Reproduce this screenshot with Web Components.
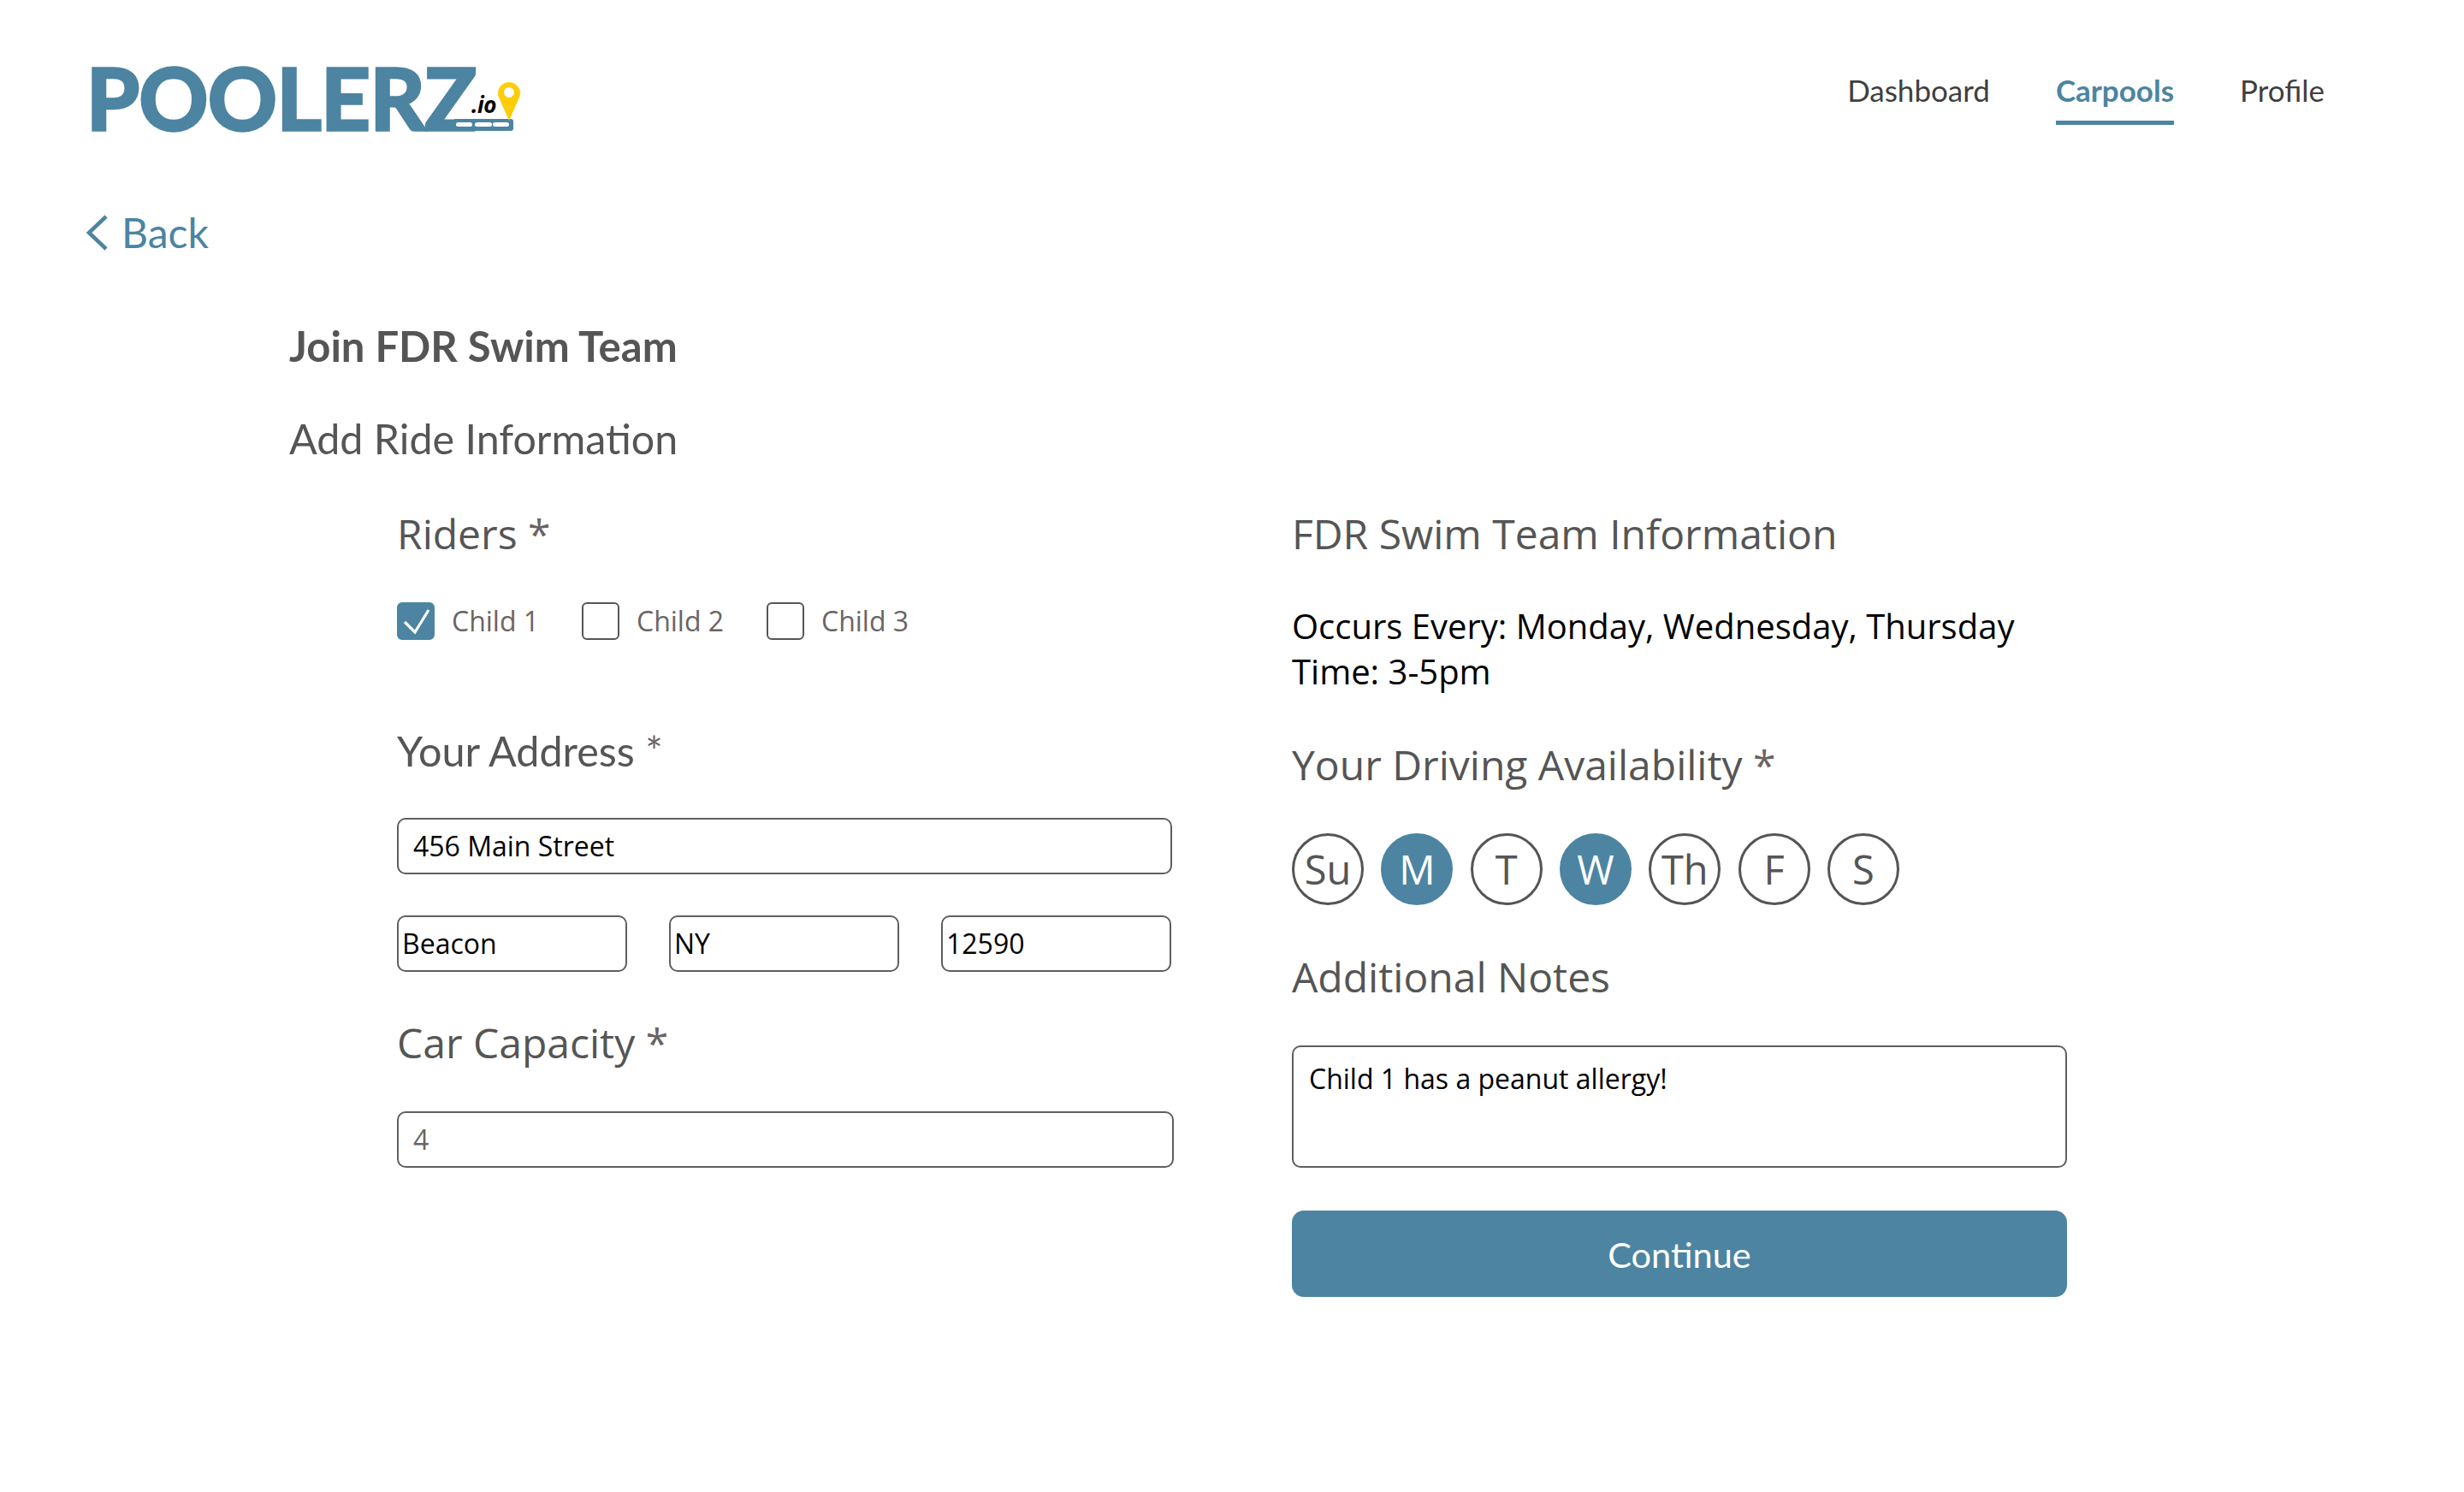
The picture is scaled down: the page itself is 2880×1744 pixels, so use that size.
<!DOCTYPE html>
<html lang="en">
<head>
<meta charset="utf-8">
<title>Poolerz</title>
<style>
html,body{margin:0;padding:0;background:#fff}
body{width:2880px;height:1744px;overflow:hidden;font-family:"Open Sans",sans-serif;color:#555}
</style>
</head>
<body>
<ride-page></ride-page>
<script>
const def=(name,css,html)=>{
  customElements.define(name,class extends HTMLElement{
    constructor(){super();const r=this.attachShadow({mode:'open'});r.innerHTML=`<style>${css}</style>${html}`;}
  });
};
def('poolerz-logo',`:host{display:block;position:relative;width:520px;height:100px}
.word{display:block;padding:0 0 0 1px;font:700 100px/86px Lato,sans-serif;letter-spacing:-.3px;color:#4C84A2;-webkit-text-stroke:3.5px #4C84A2;white-space:nowrap;height:100px}
.io{position:absolute;left:451px;top:32px;font:italic 700 26px/40px "Open Sans",sans-serif;color:#000;letter-spacing:-.5px}
svg{display:block;position:absolute;left:0;top:0}`,`
<span class="word">POOLERZ</span>
<svg width="520" height="100" viewBox="0 0 520 100" aria-hidden="true">
  <rect x="430" y="69" width="70" height="14" rx="3" fill="#4C84A2"/>
  <rect x="433" y="73" width="19" height="5" rx="2.5" fill="#fff"/>
  <rect x="455" y="73" width="20" height="5" rx="2.5" fill="#fff"/>
  <rect x="476" y="73" width="19" height="5" rx="2.5" fill="#fff"/>
  <path fill-rule="evenodd" fill="#FFCC0A" d="M495 71 L484 46 A13 13 0 1 1 506 46 Z M495 32 A6 6 0 1 0 495 44 A6 6 0 1 0 495 32 Z"/>
</svg>
<span class="io">.io</span>`);
def('nav-link',`:host{display:block;font:400 35px/40px Lato,sans-serif;color:#3f3f3f;padding-bottom:16px;border-bottom:5px solid transparent}
:host([active]){font-weight:700;color:#4C84A2;border-bottom-color:#4C84A2}`,`<slot></slot>`);
def('site-header',`:host{display:flex;justify-content:space-between;align-items:flex-start;height:240px;padding:70px 163px 0 100px;box-sizing:border-box}
nav{display:flex;gap:77px;margin-top:15px}`,`<poolerz-logo></poolerz-logo><nav><nav-link>Dashboard</nav-link><nav-link active>Carpools</nav-link><nav-link>Profile</nav-link></nav>`);
def('back-link',`:host{display:flex;align-items:center;gap:15px;height:60px;margin-left:100px;padding-top:2px;font:400 48px/60px Lato,sans-serif;color:#4C84A2}
svg{display:block}`,`<svg width="27" height="44" viewBox="0 0 27 44"><path d="M24 3 L4 22 L24 41" fill="none" stroke="#4C84A2" stroke-width="4.5" stroke-linejoin="miter"/></svg><slot></slot>`);
def('page-title',`:host{display:block;height:60px;font:400 48.4px/60px Lato,sans-serif;color:#555}
:host([strong]){font-weight:700;font-size:49px}`,`<slot></slot>`);
def('field-label',`:host{display:block;height:60px;font:400 48px/60px "Open Sans",sans-serif;color:#555;white-space:nowrap}
:host([soft]){font-family:Lato,sans-serif;font-size:48.5px}
::slotted(span){color:#6b6363}`,`<slot></slot>`);
def('check-item',`:host{display:flex;align-items:center;gap:20px;height:44px;font:400 32px/44px "Open Sans",sans-serif;color:#6b6565}
.box{width:44px;height:44px;box-sizing:border-box;border:2.5px solid #5a5555;border-radius:6px;flex:none}
:host([checked]) .box{background:#4C84A2;border-color:#4C84A2}
svg{display:none;margin:-2.5px}
:host([checked]) svg{display:block}`,`<div class="box"><svg width="44" height="44" viewBox="0 0 44 44"><path d="M9 23 L21 35 L37 9" fill="none" stroke="#fff" stroke-width="3.2" stroke-linejoin="miter"/></svg></div><slot></slot>`);
def('text-box',`:host{display:flex;align-items:center;box-sizing:border-box;height:66px;padding:0 17px;border:2.5px solid #5f5f5f;border-radius:10px;font:400 32px/44px "Open Sans",sans-serif;color:#000;background:#fff}
:host([tight]){padding:0 4px}
:host([muted]){color:#666}
:host([area]){align-items:flex-start;height:143px;padding-top:15px;padding-left:18px;border-width:2.5px}`,`<slot></slot>`);
def('day-pill',`:host{display:flex;align-items:center;justify-content:center;box-sizing:border-box;width:84px;height:84px;border:3.5px solid #555;border-radius:50%;font:400 47px/60px "Open Sans",sans-serif;color:#555}
:host([on]){background:#4C84A2;border-color:#4C84A2;color:#fff}`,`<slot></slot>`);
def('primary-button',`:host{display:flex;align-items:center;justify-content:center;box-sizing:border-box;height:101px;background:#4C84A2;color:#fff;border-radius:14px;font:400 41.5px/60px Lato,sans-serif}`,`<slot></slot>`);
def('rider-column',`:host{display:block;width:908px}
.checks{display:flex;margin-top:50px}
check-item{width:216px}
.addr{margin-top:99px}
.street{margin-top:49px;margin-right:2px}
.trio{display:grid;grid-template-columns:repeat(3,269px);gap:49px;margin-top:48px}
.cap{margin-top:53px}
.cap-in{margin-top:50px}`,`
<field-label>Riders <span>*</span></field-label>
<div class="checks"><check-item checked>Child 1</check-item><check-item>Child 2</check-item><check-item>Child 3</check-item></div>
<field-label soft class="addr">Your Address <span>*</span></field-label>
<text-box class="street">456 Main Street</text-box>
<div class="trio"><text-box tight>Beacon</text-box><text-box tight>NY</text-box><text-box tight>12590</text-box></div>
<field-label class="cap">Car Capacity <span>*</span></field-label>
<text-box class="cap-in" muted>4</text-box>`);
def('event-info',`:host{display:block;margin-top:51px;font:400 40px/53px "Open Sans",sans-serif;color:#000}`,`<slot></slot>`);
def('driver-column',`:host{display:block;width:906px}
.lab2{margin-top:53px}
.days{display:flex;justify-content:space-between;width:710px;margin-top:50px}
.lab3{margin-top:54px}
.notes{margin-top:50px}
primary-button{margin-top:50px}`,`
<field-label>FDR Swim Team Information</field-label>
<event-info>Occurs Every: Monday, Wednesday, Thursday<br>Time: 3-5pm</event-info>
<field-label class="lab2">Your Driving Availability <span>*</span></field-label>
<div class="days"><day-pill>Su</day-pill><day-pill on>M</day-pill><day-pill>T</day-pill><day-pill on>W</day-pill><day-pill>Th</day-pill><day-pill>F</day-pill><day-pill>S</day-pill></div>
<field-label class="lab3">Additional Notes</field-label>
<text-box class="notes" area>Child 1 has a peanut allergy!</text-box>
<primary-button>Continue</primary-button>`);
def('ride-page',`:host{display:block;width:2880px;height:1744px}
main{padding:72px 0 0 338px}
.sub{margin-top:48px}
.cols{display:flex;gap:138px;margin:52px 0 0 126px}`,`
<site-header></site-header>
<back-link>Back</back-link>
<main>
<page-title strong>Join FDR Swim Team</page-title>
<page-title class="sub">Add Ride Information</page-title>
<div class="cols"><rider-column></rider-column><driver-column></driver-column></div>
</main>`);
</script>
</body>
</html>
